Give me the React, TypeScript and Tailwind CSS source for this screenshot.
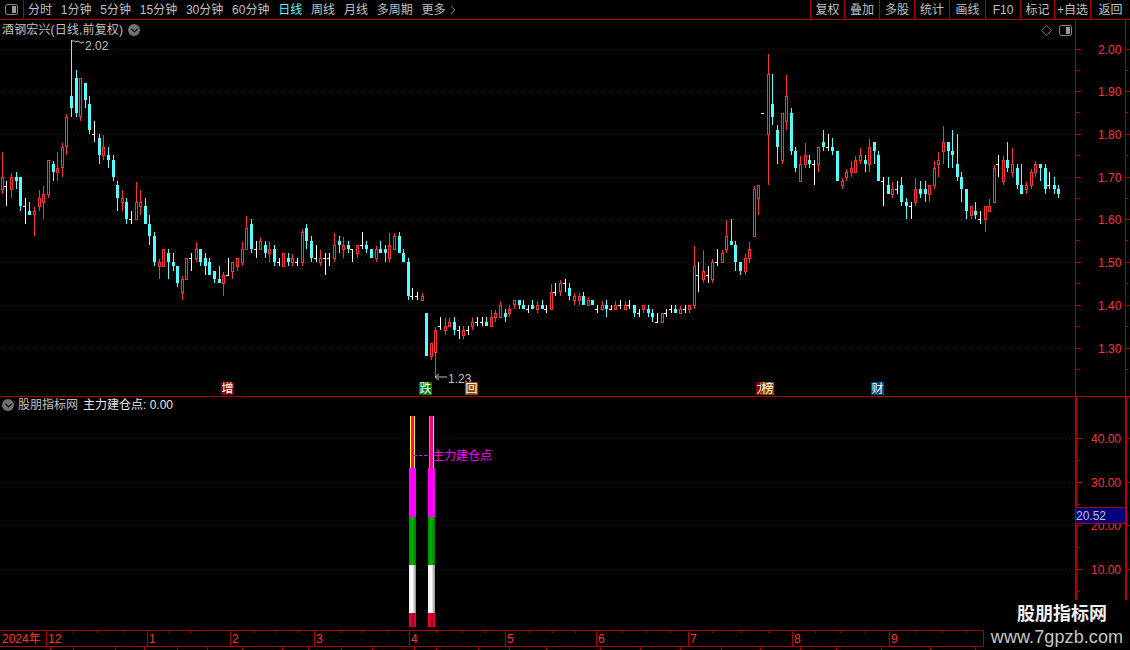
import { ChevronDown, ChevronRight } from "lucide-react";

type Kind = "r" | "c" | "w";
type Row = [number, Kind, number, number, number, number];
type Candle = { x: number; kind: Kind; hi: number; top: number; bot: number; lo: number };

const RED = "#ff3232";
const CYAN = "#54ffff";

// rows are read at 3x, so each block has its own origin
const toCandles = (ox: number, oy: number, rows: Row[]): Candle[] =>
  rows.map(([x, kind, hi, top, bot, lo]) => ({
    x: Math.floor(ox + x / 3),
    kind,
    hi: Math.round(oy + hi / 3),
    top: Math.round(oy + top / 3),
    bot: Math.round(oy + bot / 3),
    lo: Math.round(oy + lo / 3),
  }));

const candles: Candle[] = [
  ...toCandles(0, 30, [
    [7, "r", 365, 442, 480, 492], [19, "w", 452, 467, 467, 528], [33, "r", 430, 442, 480, 504], [49, "c", 427, 442, 452, 478],
    [61, "c", 442, 442, 528, 543], [76, "w", 504, 528, 528, 582], [88, "c", 516, 544, 555, 555], [103, "r", 532, 544, 556, 618],
    [118, "r", 480, 504, 530, 543], [130, "r", 468, 492, 518, 567], [145, "r", 390, 390, 494, 504], [160, "c", 392, 403, 427, 453],
    [172, "r", 365, 415, 428, 453], [187, "r", 340, 352, 415, 440], [199, "r", 252, 262, 352, 375], [214, "c", 30, 198, 234, 260],
    [229, "c", 120, 144, 249, 260], [241, "r", 144, 144, 262, 272], [256, "c", 158, 158, 210, 234], [268, "c", 198, 222, 300, 312],
    [283, "w", 272, 313, 313, 336], [298, "c", 312, 324, 375, 402], [310, "r", 315, 352, 378, 390], [325, "c", 352, 375, 390, 414],
    [340, "c", 375, 390, 441, 453], [352, "c", 453, 465, 504, 543], [367, "r", 480, 504, 518, 543], [379, "c", 504, 516, 567, 582],
    [394, "w", 543, 568, 568, 582], [409, "r", 456, 516, 570, 570], [421, "r", 480, 516, 530, 555], [436, "c", 504, 528, 582, 582],
    [448, "c", 555, 582, 618, 645], [463, "c", 606, 618, 696, 708], [478, "r", 688, 696, 710, 747], [490, "r", 657, 657, 710, 710],
    [505, "c", 657, 670, 696, 747], [520, "c", 670, 696, 708, 722], [532, "c", 708, 708, 760, 772], [547, "r", 738, 747, 788, 810],
    [559, "r", 684, 684, 750, 750], [574, "w", 670, 684, 684, 722], [589, "r", 636, 657, 687, 696], [601, "c", 657, 657, 696, 708],
    [616, "c", 670, 684, 708, 735], [628, "c", 684, 696, 735, 735], [643, "c", 723, 723, 747, 760], [658, "c", 708, 747, 760, 760],
    [670, "r", 726, 735, 762, 798], [685, "w", 684, 735, 735, 738], [697, "r", 696, 696, 725, 748], [712, "r", 684, 684, 710, 723],
    [727, "r", 636, 657, 698, 708], [739, "r", 558, 595, 659, 659], [754, "c", 568, 582, 657, 668], [769, "w", 632, 657, 657, 684],
  ]),
  ...toCandles(230, 210, [
    [91, "r", 82, 94, 120, 120], [106, "c", 94, 105, 130, 144], [118, "r", 96, 118, 132, 156], [133, "c", 105, 118, 156, 168],
    [148, "w", 144, 156, 156, 168], [160, "r", 130, 130, 170, 170], [175, "c", 130, 144, 156, 168], [187, "r", 132, 144, 158, 168],
    [202, "w", 144, 156, 156, 168], [217, "r", 57, 67, 158, 168], [229, "c", 42, 54, 93, 118], [244, "c", 79, 93, 144, 156],
    [259, "w", 105, 144, 144, 156], [271, "r", 120, 144, 158, 168], [286, "w", 130, 144, 144, 195], [298, "w", 130, 144, 144, 168],
    [313, "r", 69, 105, 147, 156], [328, "c", 79, 93, 105, 130], [340, "r", 82, 105, 120, 144], [355, "c", 94, 105, 118, 130],
    [367, "w", 118, 118, 118, 156], [382, "r", 106, 106, 132, 144], [397, "w", 67, 105, 105, 118], [409, "c", 94, 105, 118, 130],
    [424, "c", 118, 118, 144, 144], [439, "r", 108, 118, 147, 156], [451, "c", 94, 118, 130, 130], [466, "c", 105, 118, 130, 156],
    [478, "r", 69, 106, 147, 156], [493, "r", 69, 79, 120, 120], [508, "c", 67, 79, 130, 130], [520, "c", 118, 130, 156, 156],
    [535, "c", 144, 156, 258, 270], [547, "w", 234, 258, 258, 270], [562, "w", 246, 258, 258, 270], [577, "r", 250, 258, 272, 272],
    [589, "c", 309, 309, 438, 438], [604, "r", 400, 400, 441, 450], [616, "r", 350, 360, 429, 500], [631, "w", 321, 349, 349, 360],
    [646, "r", 324, 349, 362, 375], [658, "r", 324, 336, 351, 351], [673, "c", 321, 336, 360, 375], [688, "w", 348, 360, 360, 387],
    [700, "r", 349, 360, 378, 387], [715, "w", 348, 360, 360, 375], [727, "r", 324, 336, 351, 360], [742, "w", 321, 336, 336, 348],
    [757, "w", 321, 336, 336, 348], [769, "c", 321, 336, 348, 348],
  ]),
  ...toCandles(490, 170, [
    [4, "r", 420, 441, 471, 471], [16, "r", 420, 430, 444, 456], [31, "r", 393, 405, 444, 444], [46, "c", 417, 429, 441, 456],
    [58, "r", 405, 417, 432, 441], [73, "r", 390, 390, 406, 417], [88, "c", 390, 390, 405, 417], [100, "c", 390, 405, 417, 417],
    [115, "w", 405, 417, 417, 429], [127, "c", 390, 405, 417, 417], [142, "r", 393, 405, 420, 429], [157, "c", 390, 405, 417, 417],
    [169, "w", 405, 417, 417, 429], [184, "r", 342, 366, 420, 420], [196, "w", 339, 366, 366, 378], [211, "r", 330, 339, 367, 378],
    [226, "w", 327, 339, 339, 366], [238, "c", 339, 354, 378, 390], [253, "r", 369, 378, 393, 405], [268, "r", 369, 378, 393, 405],
    [280, "c", 366, 378, 405, 405], [295, "r", 381, 390, 408, 408], [307, "c", 390, 390, 405, 405], [322, "w", 405, 417, 417, 429],
    [337, "r", 393, 405, 420, 420], [349, "c", 390, 405, 417, 441], [364, "w", 405, 417, 417, 420], [376, "r", 393, 405, 420, 420],
    [391, "w", 390, 405, 405, 417], [406, "r", 393, 405, 420, 420], [418, "w", 390, 405, 405, 417], [433, "c", 405, 405, 429, 441],
    [448, "w", 417, 429, 429, 441], [460, "r", 405, 405, 420, 429], [475, "c", 405, 417, 429, 441], [487, "c", 417, 429, 441, 456],
    [502, "w", 429, 456, 456, 459], [517, "r", 430, 430, 459, 459], [529, "w", 417, 429, 429, 441], [544, "w", 405, 417, 417, 429],
    [556, "c", 405, 417, 429, 429], [571, "r", 408, 417, 432, 432], [586, "w", 405, 417, 417, 429], [598, "r", 405, 405, 420, 429],
    [613, "r", 228, 288, 408, 417], [625, "w", 276, 316, 316, 366], [640, "r", 240, 303, 330, 339], [655, "w", 288, 316, 316, 339],
    [667, "r", 267, 276, 330, 339], [682, "w", 237, 276, 276, 288], [697, "r", 240, 249, 279, 279], [709, "r", 150, 198, 240, 249],
    [724, "c", 147, 213, 225, 225], [736, "c", 213, 225, 276, 303], [751, "c", 276, 276, 303, 315], [766, "r", 252, 264, 306, 315],
    [778, "r", 216, 237, 267, 279],
  ]),
  ...toCandles(750, 40, [
    [13, "r", 438, 447, 590, 590], [25, "r", 435, 435, 476, 525], [40, "w", 220, 220, 220, 220], [55, "r", 42, 102, 284, 435],
    [67, "c", 102, 192, 231, 255], [82, "c", 255, 270, 321, 372], [97, "r", 220, 220, 362, 372], [109, "r", 105, 168, 246, 270],
    [124, "c", 204, 219, 333, 345], [136, "c", 321, 333, 384, 396], [151, "r", 348, 373, 426, 426], [166, "r", 309, 345, 375, 384],
    [178, "c", 345, 360, 372, 384], [193, "w", 360, 373, 373, 435], [205, "r", 321, 321, 375, 396], [220, "c", 270, 306, 321, 333],
    [235, "w", 282, 321, 321, 333], [247, "c", 294, 321, 333, 345], [262, "c", 333, 333, 423, 423], [277, "r", 414, 423, 438, 447],
    [289, "r", 387, 396, 414, 423], [304, "r", 363, 384, 399, 411], [316, "r", 348, 360, 399, 399], [331, "r", 324, 345, 363, 372],
    [346, "c", 345, 360, 372, 396], [358, "r", 297, 321, 375, 396], [373, "c", 306, 306, 333, 372], [385, "c", 333, 345, 423, 423],
    [400, "w", 411, 423, 423, 498], [415, "c", 411, 435, 462, 462], [427, "r", 426, 447, 465, 474], [442, "w", 423, 447, 447, 462],
    [454, "c", 411, 435, 486, 498], [469, "c", 474, 486, 498, 537], [484, "w", 486, 498, 498, 537], [496, "r", 414, 447, 489, 498],
    [511, "c", 423, 447, 462, 474], [526, "c", 423, 447, 462, 486], [538, "r", 435, 435, 465, 486], [553, "r", 363, 384, 438, 447],
    [565, "r", 336, 360, 375, 411], [580, "r", 258, 306, 336, 372], [595, "c", 306, 306, 333, 384], [607, "c", 270, 333, 345, 384],
    [622, "c", 282, 372, 411, 423], [634, "c", 396, 411, 447, 486], [649, "c", 447, 447, 513, 537], [664, "r", 499, 499, 528, 537],
    [676, "c", 486, 513, 525, 537], [691, "w", 513, 537, 537, 552], [706, "r", 499, 499, 540, 576], [718, "r", 477, 498, 516, 516],
    [733, "r", 375, 384, 489, 489], [745, "w", 345, 372, 372, 411], [760, "r", 348, 360, 426, 435], [772, "c", 306, 360, 384, 396],
    [787, "r", 324, 373, 399, 411], [802, "c", 372, 384, 435, 447], [814, "c", 372, 435, 462, 462], [829, "r", 426, 435, 450, 462],
    [844, "r", 387, 396, 438, 447], [856, "r", 363, 372, 399, 411], [871, "c", 372, 372, 384, 423], [886, "c", 372, 384, 447, 462],
    [898, "w", 396, 435, 435, 447], [913, "c", 411, 435, 447, 462], [925, "c", 435, 447, 462, 474],
  ]),
];

const leftTools = ["分时", "1分钟", "5分钟", "15分钟", "30分钟", "60分钟", "日线", "周线", "月线", "多周期"];
const rightTools = [
  { label: "复权", w: "w-[34px]" },
  { label: "叠加", w: "w-[35px]" },
  { label: "多股", w: "w-[35px]" },
  { label: "统计", w: "w-[35px]" },
  { label: "画线", w: "w-[36px]" },
  { label: "F10", w: "w-[35px]" },
  { label: "标记", w: "w-[34px]" },
  { label: "+自选", w: "w-[36px]" },
  { label: "返回", w: "flex-1" },
];

const priceGrid = [49, 91, 134, 177, 219, 262, 305, 348];
const priceLabels = ["2.00", "1.90", "1.80", "1.70", "1.60", "1.50", "1.40", "1.30"];
const subGrid = [438, 482, 525, 569];
const subLabels = ["40.00", "30.00", "20.00", "10.00"];
const months = [
  { label: "2024年", w: "w-[47px] pl-[2px]" },
  { label: "12", w: "w-[101px] pl-px" },
  { label: "1", w: "w-[83px] pl-px" },
  { label: "2", w: "w-[84px] pl-px" },
  { label: "3", w: "w-[95px] pl-px" },
  { label: "4", w: "w-[96px] pl-px" },
  { label: "5", w: "w-[91px] pl-px" },
  { label: "6", w: "w-[92px] pl-px" },
  { label: "7", w: "w-[104px] pl-px" },
  { label: "8", w: "w-[97px] pl-px" },
  { label: "9", w: "w-[94px] pl-px" },
];
const topTicks = [73, 98, 123, 169, 190, 252, 275, 298, 340, 362, 387, 436, 460, 484, 530, 552, 575, 620, 645, 668, 712, 740, 768, 815, 840, 865, 915, 940, 965];
const bottomTicks = [50, 73, 115, 144, 177, 207, 242, 282, 308, 341, 372, 414, 436, 478, 509, 546, 600, 640, 680, 721, 760, 800, 836, 881, 930, 975];

function CandleMark({ c }: { c: Candle }) {
  if (c.kind === "w") {
    return (
      <g fill="#fff">
        {c.lo > c.hi ? <rect x={c.x} y={c.hi} width={1} height={c.lo - c.hi} /> : null}
        <rect x={c.x - 2} y={c.top} width={3} height={1} />
      </g>
    );
  }
  const color = c.kind === "r" ? RED : CYAN;
  const h = Math.max(c.bot - c.top, 2);
  return (
    <g>
      <rect x={c.x} y={c.hi} width={1} height={Math.max(c.lo - c.hi, 1)} fill={color} />
      <rect x={c.x - 1} y={c.top} width={3} height={h} fill={color} />
      {c.kind === "r" && h > 2 ? <rect x={c.x} y={c.top + 1} width={1} height={h - 2} fill="#000" /> : null}
    </g>
  );
}

function DottedGrid({ rows }: { rows: number[] }) {
  return (
    <>
      {rows.map((y) => (
        <line key={y} x1={1} x2={1075} y1={y + 0.5} y2={y + 0.5} stroke="#8c0000" strokeDasharray="1 3" />
      ))}
    </>
  );
}

function ToggleIcon({ side }: { side: "left" | "right" }) {
  return (
    <svg width="13" height="11" viewBox="0 0 13 11" className="shrink-0">
      <rect x="0.5" y="0.5" width="12" height="10" rx="2" fill="#000" stroke="#8a8a8a" />
      <rect x={side === "left" ? 2 : 7} y="2" width="4" height="7" fill="#9a9a9a" />
    </svg>
  );
}

function RoundChevron() {
  return (
    <span className="flex size-3 shrink-0 items-center justify-center rounded-full bg-[#707070] text-black">
      <ChevronDown size={11} strokeWidth={2.5} />
    </span>
  );
}

function Tag({ text, bg, left }: { text: string; bg: string; left: string }) {
  return (
    <span className={`absolute top-[362px] flex h-[13px] w-[13px] items-center justify-center text-xs leading-none text-white ${bg} ${left}`}>
      {text}
    </span>
  );
}

function Toolbar() {
  return (
    <div className="flex h-5 shrink-0 items-stretch border-b border-[#b00000] text-xs text-[#c0c0c0]">
      <div className="flex w-6 items-center justify-center border-r border-[#b00000]">
        <ToggleIcon side="right" />
      </div>
      <div className="flex flex-1 items-center gap-[8.8px] pl-1">
        {leftTools.map((t) => (
          <span key={t} className={t === "日线" ? "text-[#54ffff]" : ""}>
            {t}
          </span>
        ))}
        <span className="flex items-center">
          更多
          <ChevronRight size={14} strokeWidth={1.25} />
        </span>
      </div>
      <div className="flex w-[320px] items-center">
        {rightTools.map((t) => (
          <span
            key={t.label}
            className={`flex h-full items-center justify-center border-l border-[#b00000] whitespace-nowrap ${t.w}`}
          >
            {t.label}
          </span>
        ))}
      </div>
    </div>
  );
}

function PricePane() {
  return (
    <div className="flex h-[377px] shrink-0 border-b border-[#b00000]">
      <div className="relative w-[1075px] shrink-0">
        <svg width="1075" height="376" viewBox="0 20 1075 376" shapeRendering="crispEdges" className="block">
          <DottedGrid rows={priceGrid} />
          {candles.map((c) => (
            <CandleMark key={`${c.x}-${c.top}`} c={c} />
          ))}
          <path d="M72 41h3M75 42l3-1 3 2 3-1" fill="none" stroke="#c0c0c0" shapeRendering="auto" />
          <path d="M435 377h12M435 377l4-3M435 377l4 3" fill="none" stroke="#c0c0c0" shapeRendering="auto" />
        </svg>
        <div className="absolute top-[2px] left-[2px] flex items-center gap-[5px] text-xs text-[#c0c0c0]">
          <span className="tracking-[0.15px]">酒钢宏兴(日线,前复权)</span>
          <RoundChevron />
        </div>
        <div className="absolute top-[5px] right-[3px] flex items-center gap-[7px]">
          <svg width="11" height="11" viewBox="0 0 11 11">
            <path d="M5.5 .5l5 5-5 5-5-5z" fill="none" stroke="#707070" />
          </svg>
          <ToggleIcon side="right" />
        </div>
        <span className="absolute top-[18px] left-[85px] text-xs text-[#c0c0c0]">2.02</span>
        <span className="absolute top-[351px] left-[448px] text-xs text-[#c0c0c0]">1.23</span>
        <Tag text="增" bg="bg-[#8c0000]" left="left-[221px]" />
        <Tag text="跌" bg="bg-[#007800]" left="left-[419px]" />
        <Tag text="回" bg="bg-[#8c4a00]" left="left-[465px]" />
        <Tag text="龙" bg="bg-[#8c0000]" left="left-[756px]" />
        <Tag text="榜" bg="bg-[#8c4a00]" left="left-[761px]" />
        <Tag text="财" bg="bg-[#004a80]" left="left-[871px]" />
      </div>
      <svg width="55" height="376" viewBox="1075 20 55 376" shapeRendering="crispEdges" className="block">
        <rect x={1075} y={20} width={1} height={376} fill="#b00000" />
        <rect x={1125} y={20} width={1} height={376} fill="#b00000" />
        {priceGrid.map((y, i) => (
          <g key={y}>
            <rect x={1076} y={y} width={5} height={1} fill="#b00000" />
            <rect x={1076} y={y + 21} width={3} height={1} fill="#b00000" />
            <rect x={1126} y={y} width={4} height={1} fill="#b00000" />
            <rect x={1126} y={y + 21} width={2} height={1} fill="#b00000" />
            <text x={1098} y={y + 5} fontSize={12} fill={RED} fontFamily="Liberation Sans" shapeRendering="auto">
              {priceLabels[i]}
            </text>
          </g>
        ))}
      </svg>
    </div>
  );
}

function SignalBar({ x, edge }: { x: number; edge: string }) {
  return (
    <g>
      <rect x={x + 1} y={416} width={5} height={52} fill="#ffff00" />
      <rect x={x + 1} y={416} width={1} height={52} fill={edge} />
      <rect x={x + 2} y={416} width={3} height={52} fill="#ff0080" />
      <rect x={x} y={468} width={7} height={49} fill="#ff00ff" />
      <rect x={x} y={517} width={7} height={48} fill="url(#green-bar)" />
      <rect x={x} y={565} width={7} height={48} fill="url(#white-bar)" />
      <rect x={x} y={613} width={7} height={14} fill="url(#red-bar)" />
    </g>
  );
}

function IndicatorPane() {
  return (
    <div className="flex h-[233px] shrink-0">
      <div className="relative w-[1075px] shrink-0">
        <svg width="1075" height="233" viewBox="0 397 1075 233" shapeRendering="crispEdges" className="block">
          <defs>
            <linearGradient id="green-bar">
              <stop offset="0" stopColor="#008800" />
              <stop offset="0.4" stopColor="#00b800" />
              <stop offset="1" stopColor="#007800" />
            </linearGradient>
            <linearGradient id="white-bar">
              <stop offset="0" stopColor="#f0f0f0" />
              <stop offset="0.5" stopColor="#ffffff" />
              <stop offset="1" stopColor="#8a8a8a" />
            </linearGradient>
            <linearGradient id="red-bar">
              <stop offset="0" stopColor="#ff0040" />
              <stop offset="0.6" stopColor="#a00020" />
              <stop offset="1" stopColor="#ff0040" />
            </linearGradient>
          </defs>
          <DottedGrid rows={subGrid} />
          <SignalBar x={409} edge="#ffff00" />
          <SignalBar x={428} edge="#ff6090" />
          <line x1={414} x2={432} y1={455.5} y2={455.5} stroke="#ff00ff" strokeDasharray="3 2" />
        </svg>
        <div className="absolute top-px left-[2px] flex h-[14px] items-center gap-[4px] text-xs text-[#c0c0c0]">
          <RoundChevron />
          <span>股朋指标网</span>
          <span className="ml-px text-[#e8e8e8]">主力建仓点: 0.00</span>
        </div>
        <span className="absolute top-[51px] left-[432px] text-xs text-[#ff00ff]">主力建仓点</span>
      </div>
      <div className="relative flex-1">
        <svg width="55" height="233" viewBox="1075 397 55 233" shapeRendering="crispEdges" className="block">
          <rect x={1075} y={397} width={2} height={233} fill="#b80000" />
          <rect x={1125} y={397} width={2} height={233} fill="#b80000" />
          {subGrid.map((y, i) => (
            <g key={y}>
              <rect x={1077} y={y} width={5} height={1} fill="#b00000" />
              <rect x={1077} y={y + 22} width={3} height={1} fill="#b00000" />
              <rect x={1127} y={y} width={3} height={1} fill="#b00000" />
              <text x={1091} y={y + 5} fontSize={12} fill={RED} fontFamily="Liberation Sans" shapeRendering="auto">
                {subLabels[i]}
              </text>
            </g>
          ))}
        </svg>
        <span className="absolute top-[110px] left-[1px] flex h-[17px] w-[49px] items-center border-y border-[#b00000] bg-[#000080] text-xs text-[#c0c0c0]">
          20.52
        </span>
      </div>
    </div>
  );
}

function DateBar() {
  return (
    <div className="relative flex h-[17px] shrink-0 border-y border-[#b00000] text-xs text-[#ff3232]">
      {months.map((m) => (
        <span key={m.label} className={`border-r border-[#b00000] leading-[16px] ${m.w}`}>
          {m.label}
        </span>
      ))}
      <svg width="1130" height="21" viewBox="0 0 1130 21" className="absolute -top-px left-0" shapeRendering="crispEdges">
        {topTicks.map((x) => (
          <rect key={x} x={x} y={1} width={1} height={2} fill="#b00000" />
        ))}
        {bottomTicks.map((x) => (
          <rect key={x} x={x} y={16} width={1} height={4} fill="#b00000" />
        ))}
      </svg>
    </div>
  );
}

export default function App() {
  return (
    <div
      className="relative flex h-[650px] w-[1130px] flex-col overflow-hidden bg-black"
      style={{ fontFamily: '"Liberation Sans", "Noto Sans CJK SC", sans-serif' }}
    >
      <Toolbar />
      <PricePane />
      <IndicatorPane />
      <DateBar />
      <div className="absolute top-[600px] left-[984px] flex h-[50px] w-[146px] flex-col items-center bg-black">
        <span className="mt-[2px] ml-[10px] text-[18px] leading-[25px] font-bold text-[#f0f0f0]">股朋指标网</span>
        <span className="text-[18px] leading-[20px] font-medium tracking-[0.1px] text-[#c8c8c8]">www.7gpzb.com</span>
      </div>
    </div>
  );
}
